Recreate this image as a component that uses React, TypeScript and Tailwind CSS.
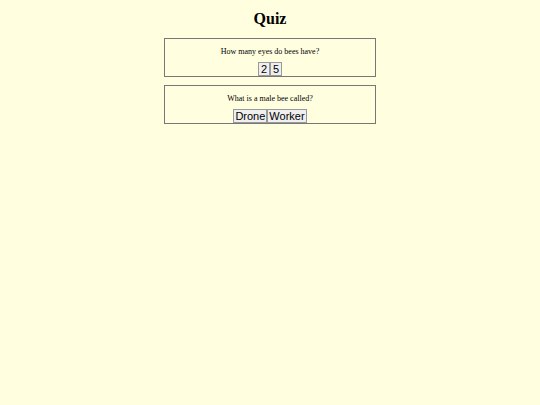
import React from 'react';

const questions = [
  { q: 'How many eyes do bees have?', options: ['2', '5'] },
  { q: 'What is a male bee called?', options: ['Drone', 'Worker'] },
];

export default function App() {
  return (
    <div className="min-h-screen w-full bg-[#ffffe0] font-['Liberation_Serif',serif] text-black">
      <h1 className="pt-[9px] text-center text-[16px] font-bold leading-[20px]">Quiz</h1>
      <div className="mx-auto mt-[9px] flex w-[212px] flex-col gap-[8px]">
        {questions.map((item) => (
          <div key={item.q} className="flex flex-col items-center border border-[#777] pt-[8px]">
            <p className="text-[8px] leading-[10px]">{item.q}</p>
            <div className="mt-[5px] flex">
              {item.options.map((o) => (
                <button
                  key={o}
                  className="min-w-[12px] border border-[#999] bg-[#efefef] px-[1px] font-['Liberation_Sans',sans-serif] text-[11px] leading-[12px] text-black"
                >
                  {o}
                </button>
              ))}
            </div>
          </div>
        ))}
      </div>
    </div>
  );
}
